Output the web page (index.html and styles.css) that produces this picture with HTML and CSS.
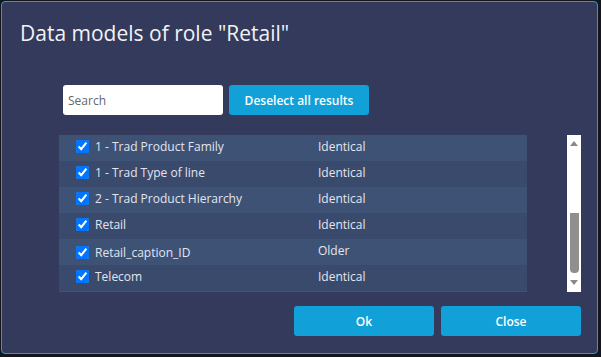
FILE: index.html
```html
<!DOCTYPE html>
<html lang="en">
<head>
  <meta charset="UTF-8">
  <title>Data models of role "Retail"</title>
  <link rel="stylesheet" href="styles.css">
</head>
<body>
<div class="dialog">
  <h1 class="dialog-title">Data models of role "Retail"</h1>

  <div class="toolbar">
    <input type="text" class="search" placeholder="Search">
    <button class="btn btn-deselect">Deselect all results</button>
  </div>

  <div class="list-area">
    <div class="list">
      <div class="row">
        <label class="cell-name"><input type="checkbox" checked> 1 - Trad Product Family</label>
        <span class="cell-status">Identical</span>
      </div>
      <div class="row">
        <label class="cell-name"><input type="checkbox" checked> 1 - Trad Type of line</label>
        <span class="cell-status">Identical</span>
      </div>
      <div class="row">
        <label class="cell-name"><input type="checkbox" checked> 2 - Trad Product Hierarchy</label>
        <span class="cell-status">Identical</span>
      </div>
      <div class="row">
        <label class="cell-name"><input type="checkbox" checked> Retail</label>
        <span class="cell-status">Identical</span>
      </div>
      <div class="row row-top">
        <label class="cell-name"><input type="checkbox" checked> Retail_caption_ID</label>
        <span class="cell-status">Older</span>
      </div>
      <div class="row">
        <label class="cell-name"><input type="checkbox" checked> Telecom</label>
        <span class="cell-status">Identical</span>
      </div>
    </div>

    <div class="scrollbar">
      <div class="arrow-up"></div>
      <div class="track"><div class="thumb"></div></div>
      <div class="arrow-down"></div>
    </div>
  </div>

  <div class="actions">
    <button class="btn btn-action">Ok</button>
    <button class="btn btn-action">Close</button>
  </div>
</div>
</body>
</html>
```

FILE: styles.css
```css
body {
  margin: 0;
  background-color: #15161c;
  font-family: "Open Sans", "Noto Sans", sans-serif;
}

.dialog {
  box-sizing: border-box;
  width: 597px;
  height: 353px;
  margin: 1px 0 0 1px;
  padding: 18px 16px 0 18px;
  background-color: #333a5c;
  border: 1px solid #1b9fd8;
  border-radius: 4px;
}

.dialog-title {
  margin: 0;
  font-size: 21px;
  font-weight: normal;
  line-height: 27px;
  color: #f2f2f5;
}

.toolbar {
  display: flex;
  gap: 6px;
  margin: 38px 0 0 43px;
  height: 30px;
}

.search {
  box-sizing: border-box;
  width: 160px;
  height: 30px;
  padding: 0 5px;
  border: none;
  border-radius: 3px;
  background: #fff;
  font-family: inherit;
  font-size: 12px;
  color: #333;
  outline: none;
}

.search::placeholder {
  color: #666;
}

.btn {
  border: none;
  border-radius: 3px;
  background-color: #12a0d8;
  color: #fff;
  font-family: inherit;
  font-size: 12px;
  font-weight: 600;
  cursor: pointer;
}

.btn-deselect {
  width: 140px;
  height: 30px;
}

.list-area {
  display: flex;
  gap: 40px;
  margin: 20px 0 0 39px;
  height: 157px;
}

.list {
  width: 469px;
  height: 157px;
  overflow: hidden;
  border-bottom: 1px solid #3e5276;
  box-sizing: border-box;
}

.row {
  box-sizing: border-box;
  display: flex;
  align-items: center;
  height: 26px;
  padding-bottom: 3px;
  font-size: 12px;
  color: #e3e5ee;
  background-color: #3e5276;
}

.row:nth-child(even) {
  background-color: #3a4a6d;
}

.row-top .cell-status {
  align-self: flex-start;
  padding-top: 3px;
}

.row-top .cell-name {
  padding-top: 4px;
}

.cell-name {
  display: flex;
  align-items: center;
  width: 242px;
  padding-left: 17px;
}

.cell-name input {
  width: 13px;
  height: 13px;
  margin: 0 6px 0 0;
}

.scrollbar {
  box-sizing: border-box;
  width: 14px;
  height: 157px;
  padding: 6px 0 7px;
  background: #fff;
  display: flex;
  flex-direction: column;
  align-items: center;
}

.arrow-up {
  border-left: 4px solid transparent;
  border-right: 4px solid transparent;
  border-bottom: 5px solid #8a8a8a;
}

.arrow-down {
  border-left: 4px solid transparent;
  border-right: 4px solid transparent;
  border-top: 5px solid #8a8a8a;
}

.track {
  flex: 1;
  width: 9px;
}

.thumb {
  margin-top: 67px;
  height: 60px;
  background: #8f8f8f;
  border-radius: 0 0 4px 4px;
}

.actions {
  display: flex;
  justify-content: flex-end;
  gap: 7px;
  margin-top: 14px;
}

.btn-action {
  width: 140px;
  height: 30px;
}
```
